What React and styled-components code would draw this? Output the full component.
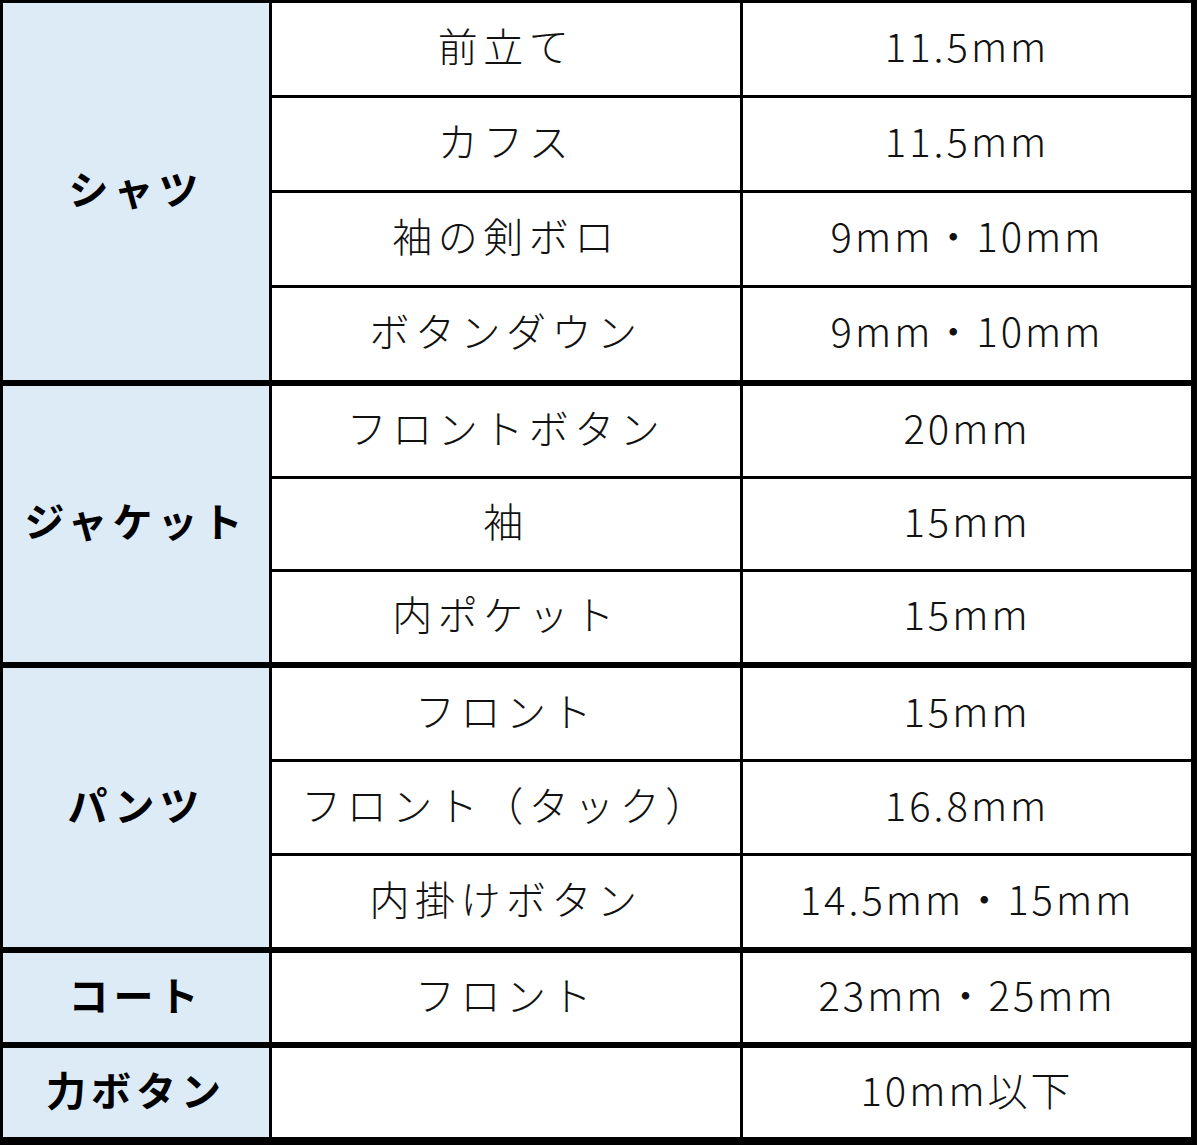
import React from 'react';
import styled, { createGlobalStyle } from 'styled-components';

const GlobalStyle = createGlobalStyle`
  body {
    margin: 0;
    background: #fff;
    font-family: 'Noto Sans CJK JP', 'Noto Sans', sans-serif;
  }
`;

const Table = styled.div`
  width: 1197px;
  box-sizing: border-box;
  background: #000;
  padding: 3px 6px 8px 3px;
  display: flex;
  flex-direction: column;
  gap: 6px;
`;

const Group = styled.div`
  display: grid;
  grid-template-columns: 266px 468px 448px;
  grid-auto-rows: ${({ rowHeight }) => rowHeight}px;
  column-gap: 3px;
  row-gap: 3px;
`;

const Cell = styled.div`
  grid-column: ${({ col }) => col || 'auto'};
  display: flex;
  align-items: center;
  justify-content: center;
  box-sizing: border-box;
  padding-bottom: 8px;
  background: #fff;
  color: #111;
  font-size: 40px;
  font-weight: 300;
  letter-spacing: ${({ spacing }) => spacing || 3}px;
  white-space: nowrap;
`;

const Category = styled(Cell)`
  grid-row: span ${({ rows }) => rows};
  background: #ddebf7;
  color: #000;
  font-weight: 700;
  letter-spacing: 5px;
`;

const data = [
  {
    name: 'シャツ',
    h: 92,
    rows: [
      ['前立て', '11.5mm'],
      ['カフス', '11.5mm'],
      ['袖の剣ボロ', '9mm・10mm'],
      ['ボタンダウン', '9mm・10mm'],
    ],
  },
  {
    name: 'ジャケット',
    h: 90,
    rows: [
      ['フロントボタン', '20mm'],
      ['袖', '15mm'],
      ['内ポケット', '15mm'],
    ],
  },
  {
    name: 'パンツ',
    h: 91,
    rows: [
      ['フロント', '15mm'],
      ['フロント（タック）', '16.8mm'],
      ['内掛けボタン', '14.5mm・15mm'],
    ],
  },
  { name: 'コート', h: 89, rows: [['フロント', '23mm・25mm']] },
  { name: '力ボタン', h: 89, rows: [['', '10mm以下']] },
];

const App = () => {
  return (
    <>
      <GlobalStyle />
      <Table>
        {data.map((g) => (
          <Group key={g.name} rowHeight={g.h}>
            <Category rows={g.rows.length}>{g.name}</Category>
            {g.rows.map(([part, size], i) => (
              <React.Fragment key={i}>
                <Cell col={2} spacing={5.5}>{part}</Cell>
                <Cell col={3}>{size}</Cell>
              </React.Fragment>
            ))}
          </Group>
        ))}
      </Table>
    </>
  );
};

export default App;
